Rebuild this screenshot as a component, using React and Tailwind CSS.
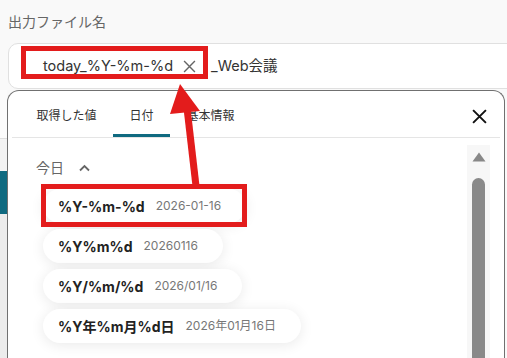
import React from 'react';

const items = [
  { fmt: '%Y-%m-%d', value: '2026-01-16' },
  { fmt: '%Y%m%d', value: '20260116' },
  { fmt: '%Y/%m/%d', value: '2026/01/16' },
  { fmt: '%Y年%m月%d日', value: '2026年01月16日' },
];

const tabs = ['取得した値', '日付', '基本情報'];

const App = () => {
  return (
    <div className="relative h-[358px] w-[507px] overflow-hidden bg-[#f9f9f9] font-['Inter','Noto_Sans_CJK_JP',sans-serif]">
      <div className="h-[43px] pl-2 pt-[13px] text-[14px] leading-[18px] text-[#666]">出力ファイル名</div>

      <div className="ml-2 flex h-[46px] w-[520px] items-center rounded-[10px] border border-[#e0e0e0] bg-white text-[14.5px] text-[#333]">
        <span className="ml-[34px]">today_%Y-%m-%d</span>
        <svg className="ml-[10px] h-[13px] w-[13px]" viewBox="0 0 12 12" fill="none" stroke="#666" strokeWidth="1.3">
          <path d="M1 1l10 10M11 1L1 11" />
        </svg>
        <span className="ml-[15px]">_Web会議</span>
      </div>

      <div className="mt-[1px] flex h-[270px]">
        <div className="flex w-[7px] flex-col">
          <div className="h-[49px] border-b border-[#dedede] bg-[#fbfbfb]" />
          <div className="h-[32px] bg-[#f3f3f3]" />
          <div className="h-[43px] bg-[#0f6a80]" />
          <div className="flex-1 bg-[#ececec]" />
        </div>

        <div className="mr-[2px] flex flex-1 flex-col rounded-t-[12px] border-x border-t border-[#707070] bg-white">
          <div className="mx-1 flex h-[47px] items-stretch border-b border-[#e5e5e5] pl-2">
            {tabs.map((t, i) => (
              <div
                key={t}
                className={`flex items-center border-b-[3px] px-[16.5px] pt-[7px] text-[12px] text-[#333] ${
                  i === 1 ? 'border-[#0f6a80]' : 'border-transparent'
                }`}
              >
                {t}
              </div>
            ))}
            <div className="ml-auto mr-[13px] flex items-center pt-[5px]">
              <svg className="h-[15px] w-[15px]" viewBox="0 0 14 14" fill="none" stroke="#111" strokeWidth="1.8">
                <path d="M1 1l12 12M13 1L1 13" />
              </svg>
            </div>
          </div>

          <div className="flex flex-1">
            <div className="flex-1 pl-[28px] pt-[20px]">
              <div className="flex items-center text-[14px] leading-[20px] text-[#666]">
                今日
                <svg className="ml-[15px] h-[8px] w-[11px]" viewBox="0 0 11 8" fill="none" stroke="#666" strokeWidth="1.8">
                  <path d="M1 6.5L5.5 2L10 6.5" />
                </svg>
              </div>
              <div className="ml-[7px] mt-[11px] flex flex-col items-start gap-[6px]">
                {items.map((it) => (
                  <div
                    key={it.fmt}
                    className="flex h-[34px] items-center gap-[11px] rounded-full bg-white pl-[15px] pr-[25px] shadow-[0_2px_14px_rgba(0,0,0,0.09)]"
                  >
                    <span className="text-[14px] font-bold text-[#222]">{it.fmt}</span>
                    <span className="text-[12px] text-[#777]">{it.value}</span>
                  </div>
                ))}
              </div>
            </div>

            <div className="mr-[14px] mt-[7px] flex w-[23px] flex-col items-center bg-[#f7f7f7]">
              <svg className="mt-[7px] h-[10px] w-[14px]" viewBox="0 0 14 10">
                <path d="M7 0.5L13.5 9.5H0.5Z" fill="#888" />
              </svg>
              <div className="mt-[16px] w-[13px] flex-1 rounded-t-full bg-[#898989]" />
            </div>
          </div>
        </div>
      </div>

      <div className="pointer-events-none absolute left-[21px] top-[46px] h-[33px] w-[187px] border-[5px] border-[#e31c1c]" />
      <div className="pointer-events-none absolute left-[41px] top-[184px] h-[43px] w-[206px] border-[5px] border-[#e31c1c]" />
      <svg className="pointer-events-none absolute left-0 top-0" width="507" height="358" viewBox="0 0 507 358">
        <path d="M187 108L196 186" stroke="#e31c1c" strokeWidth="7" />
        <path d="M180 84L170 114L200 111Z" fill="#e31c1c" />
      </svg>
    </div>
  );
};

export default App;
